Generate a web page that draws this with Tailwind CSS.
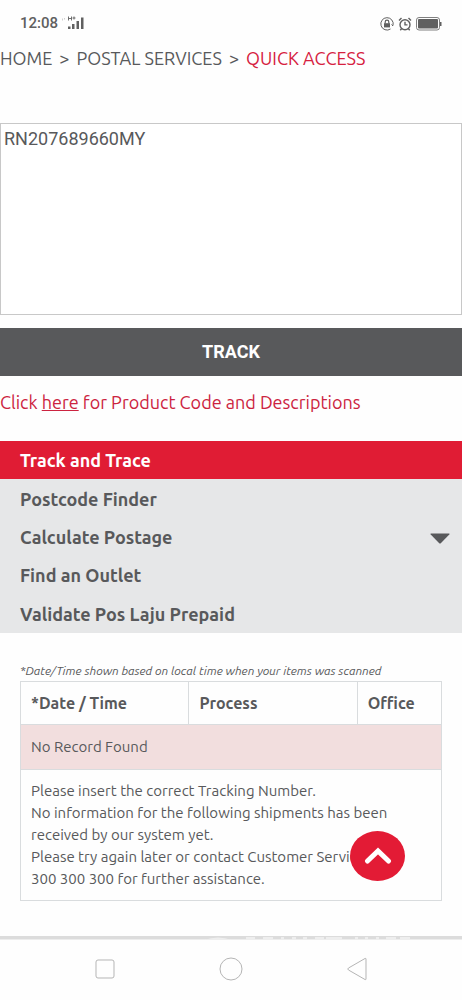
<!DOCTYPE html>
<html lang="en">
<head>
<meta charset="utf-8">
<meta name="viewport" content="width=device-width, initial-scale=1">
<title>Track and Trace</title>
<script src="https://cdn.jsdelivr.net/npm/@tailwindcss/browser@4"></script>
</head>
<body class="flex min-h-screen flex-col bg-[#fefefe] font-['Ubuntu','Noto_Sans',sans-serif] text-[#58595b]">
<header class="flex h-[47px] items-center justify-between px-5 text-[#606060]">
  <div class="flex items-center gap-1">
    <span class="font-['Roboto',sans-serif] text-[15px] font-medium">12:08</span>
    <svg class="h-4 w-6" viewBox="0 0 24 16" fill="currentColor" aria-label="Signal">
      <path d="M.5 2.500v2M2.500 2v1.500" stroke="#cfcfcf" fill="none"/>
      <path d="M6.500 .5v4M6.500 2.500h3M9.500 .5v4M10.500 2h3M12 .5v3" stroke="currentColor" stroke-width=".9" fill="none"/>
      <rect x="6" y="10.500" width="2.500" height="2.500"/><rect x="10" y="8" width="2.500" height="5"/><rect x="14.500" y="5" width="2.500" height="8"/><rect x="19" y="1.500" width="2.500" height="11.500"/>
    </svg>
  </div>
  <div class="flex items-center gap-1">
    <svg class="size-[14px]" viewBox="0 0 14 14" fill="none" stroke="currentColor" aria-label="Rotation lock">
      <path d="M10.500 12A6.200 6.200 0 1 1 13 8.500M11.500 7.500l1.500 1.500"/>
      <rect x="4" y="6.200" width="6" height="4.200" fill="currentColor" stroke="none"/><path d="M5.200 6.500V5a1.800 1.800 0 0 1 3.600 0v1.500" stroke-width="1.200"/>
    </svg>
    <svg class="size-[14px]" viewBox="0 0 14 14" fill="none" stroke="currentColor" stroke-width="1.400" aria-label="Alarm">
      <circle cx="7" cy="7.700" r="5"/><path d="M7 4.700v3.200h2.500M1 3.500L3.500 1M13 3.500L10.500 1M3.500 11.800L2.300 13.300M10.500 11.800l1.200 1.500"/>
    </svg>
    <svg class="h-[14px] w-[26px]" viewBox="0 0 26 14" aria-label="Battery">
      <rect x=".5" y=".5" width="23" height="12.500" rx="2.500" fill="none" stroke="currentColor" stroke-width=".8"/><rect x="2" y="2" width="20" height="9.500" rx="1" fill="currentColor"/><rect x="24" y="5" width="1.500" height="4" fill="currentColor"/>
    </svg>
  </div>
</header>
<main class="grow">
  <nav class="flex h-[22px] items-center gap-[7px] text-lg whitespace-nowrap" aria-label="Breadcrumb">
    <a href="#">HOME</a><span>&gt;</span><a href="#">POSTAL SERVICES</a><span>&gt;</span><a href="#" class="text-[#d6213f]">QUICK ACCESS</a>
  </nav>
  <form class="mt-[54px]">
    <textarea aria-label="Tracking number" class="block h-48 w-full resize-none border border-[#c8c8c8] bg-white px-[3px] py-[3px] font-['Roboto',sans-serif] text-lg leading-6">RN207689660MY</textarea>
    <button type="button" class="mt-[13px] block h-12 w-full bg-[#58595b] font-['Roboto',sans-serif] text-lg font-bold text-white">TRACK</button>
  </form>
  <p class="mt-[14px] text-lg leading-6 text-[#cc2340]">Click <a href="#" class="underline">here</a> for Product Code and Descriptions</p>
  <ul class="mt-[27px] grid h-48 grid-rows-5 bg-[#e6e7e8] text-lg font-bold">
    <li class="bg-[#e01c34] text-white"><a href="#" class="flex h-full items-center px-5">Track and Trace</a></li>
    <li><a href="#" class="flex h-full items-center px-5">Postcode Finder</a></li>
    <li><a href="#" class="flex h-full items-center justify-between pr-3 pl-5">Calculate Postage
      <svg class="mt-1 h-[11px] w-5" viewBox="0 0 20 11" fill="currentColor" aria-hidden="true"><path d="M1 .5h18q1 0 .3 1L11 10q-1 1-2 0L.7 1.500Q0 .5 1 .5z"/></svg></a></li>
    <li><a href="#" class="flex h-full items-center px-5">Find an Outlet</a></li>
    <li><a href="#" class="flex h-full items-center px-5">Validate Pos Laju Prepaid</a></li>
  </ul>
  <section class="px-5 pt-[30px]">
    <p class="text-xs leading-4 italic">*Date/Time shown based on local time when your items was scanned</p>
    <table class="mt-[2px] w-full border-collapse border border-[#d9dcde] text-left text-[15px] leading-[22px]">
      <thead>
        <tr class="h-[43px] text-base">
          <th class="w-[40%] border border-[#d9dcde] px-[10px]">*Date / Time</th>
          <th class="w-[40%] border border-[#d9dcde] px-[10px]">Process</th>
          <th class="w-[20%] border border-[#d9dcde] px-[10px]">Office</th>
        </tr>
      </thead>
      <tbody>
        <tr class="h-[45px]"><td colspan="3" class="border border-[#d9dcde] bg-[#f2dede] px-[10px]">No Record Found</td></tr>
        <tr><td colspan="3" class="px-[10px] py-[10px]">Please insert the correct Tracking Number.<br>No information for the following shipments has been received by our system yet.<br>Please try again later or contact Customer Service at 1 300&nbsp;300&nbsp;300 for further assistance.</td></tr>
      </tbody>
    </table>
  </section>
</main>
<button type="button" aria-label="Back to top" class="fixed right-[57px] bottom-[119px] flex h-[50px] w-[55px] items-center justify-center rounded-[50%] bg-[#e31b35] text-white">
  <svg class="h-5 w-7" viewBox="0 0 28 20" fill="none" stroke="currentColor" stroke-width="5" stroke-linecap="round" aria-hidden="true"><path d="M3.500 15L14 5L24.500 15"/></svg>
</button>
<footer>
  <svg class="block h-1 w-full" viewBox="0 0 462 4" preserveAspectRatio="none" aria-hidden="true">
    <path d="M0 0h462v3.500H0z" fill="#dcdcdc"/>
    <path d="M204 4q14-5 28 0zM246 1h9v3h-9zM263 1h10v3h-10zM281 1h3v3h-3zM292 1h4v3h-4zM303 1h4v3h-4zM315 1h9v3h-9zM326 1h16v3h-16zM355 1h3v3h-3zM365 1h3v3h-3zM376 1h3v3h-3zM386 1h10v3h-10zM400 1h10v3h-10z" fill="#eeeeee"/>
  </svg>
  <div class="flex h-15 items-center justify-around px-[42px] pb-[2px] text-[#b5b5b5]">
    <button type="button" aria-label="Recent apps"><svg class="size-6" viewBox="0 0 24 24" fill="none" stroke="currentColor"><rect x="3" y="3" width="18" height="18" rx="2"/></svg></button>
    <button type="button" aria-label="Home"><svg class="size-6" viewBox="0 0 24 24" fill="none" stroke="currentColor"><circle cx="12" cy="12" r="11"/></svg></button>
    <button type="button" aria-label="Back"><svg class="size-6" viewBox="0 0 24 24" fill="none" stroke="currentColor"><path d="M20 1.500q1-.5 1 .5v20q0 1-1 .5L3.500 13q-1.500-1 0-2z"/></svg></button>
  </div>
</footer>
</body>
</html>
